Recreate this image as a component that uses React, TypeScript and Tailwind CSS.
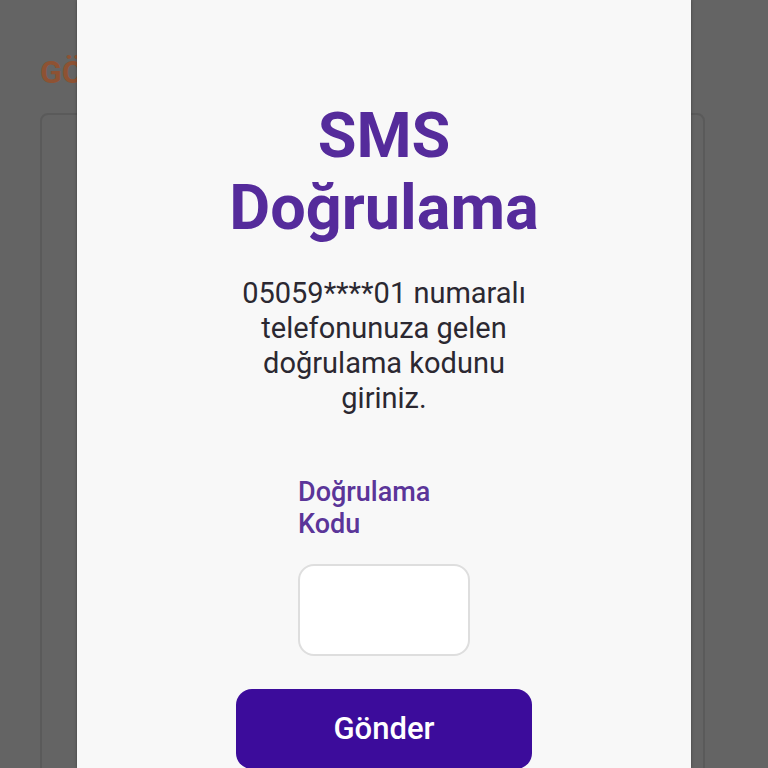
import { useState } from 'react'

function BackgroundPage() {
  return (
    <div className="pl-10 pr-[63px] pt-[50px]">
      <h1 className="text-[32px] font-bold leading-[44px] text-[#8e5233]">GÖNDERİM</h1>
      <div className="mt-[19px] h-[700px] rounded-lg border-2 border-[#5a5a5a]" />
    </div>
  )
}

function SmsVerifyDialog() {
  const [code, setCode] = useState('')

  return (
    <div className="absolute inset-0 flex justify-center">
      <div className="flex h-full w-[614px] flex-col items-center bg-[#f8f8f8] pt-[100px] shadow-[0_0_3px_rgba(0,0,0,0.35)]">
        <h2 className="text-center text-[63px] font-bold leading-[72px] text-[#552b9b]">
          SMS
          <br />
          Doğrulama
        </h2>

        <p className="mt-[32px] w-[300px] text-center text-[29px] leading-[35px] text-[#2b2831]">
          05059****01 numaralı telefonunuza gelen doğrulama kodunu giriniz.
        </p>

        <div className="mt-[60px] flex w-[172px] flex-col">
          <label className="text-[27px] font-medium leading-[32px] text-[#5b3599]">
            Doğrulama Kodu
          </label>
          <input
            value={code}
            onChange={(e) => setCode(e.target.value)}
            inputMode="numeric"
            className="mt-[24px] h-[92px] w-[172px] rounded-2xl border-2 border-[#dedede] bg-white px-4 text-center text-[28px] outline-none"
          />
        </div>

        <button className="mt-[33px] h-[80px] w-[296px] shrink-0 rounded-2xl bg-[#3c0c9b] text-[31px] font-medium text-white">
          Gönder
        </button>
      </div>
    </div>
  )
}

export default function App() {
  return (
    <div className="relative h-[768px] w-full overflow-hidden bg-[#646464] font-['Roboto',sans-serif]">
      <BackgroundPage />
      <SmsVerifyDialog />
    </div>
  )
}
